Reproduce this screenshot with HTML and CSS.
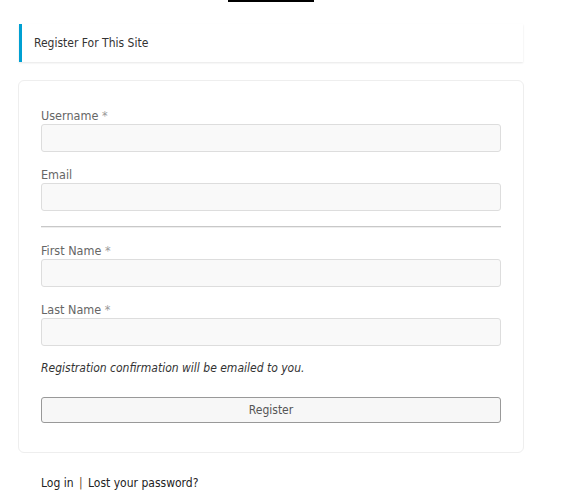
FILE: index.html
```html
<!DOCTYPE html>
<html>
<head>
<meta charset="utf-8">
<link rel="stylesheet" href="styles.css">
</head>
<body>
<div class="page">
  <div class="topline"></div>
  <div class="header">Register For This Site</div>
  <form class="card">
    <div class="field">
      <label class="label">Username <span class="req">*</span></label>
      <input class="input" type="text">
    </div>
    <div class="field">
      <label class="label">Email</label>
      <input class="input" type="text">
    </div>
    <hr class="divider">
    <div class="field">
      <label class="label">First Name <span class="req">*</span></label>
      <input class="input" type="text">
    </div>
    <div class="field">
      <label class="label">Last Name <span class="req">*</span></label>
      <input class="input" type="text">
    </div>
    <p class="note">Registration confirmation will be emailed to you.</p>
    <button class="button" type="button">Register</button>
  </form>
  <div class="links"><a class="link">Log in</a> <span class="sep">|</span> <a class="link">Lost your password?</a></div>
</div>
</body>
</html>
```
FILE: styles.css
```css
* { box-sizing: border-box; }
body {
  margin: 0;
  background: #fff;
  font-family: "DejaVu Sans Condensed", "DejaVu Sans", sans-serif;
  font-size: 12px;
  color: #333;
}
.page {
  width: 506px;
  margin-left: 18px;
}
.topline {
  width: 86px;
  height: 2px;
  background: #000;
  margin: 0 auto;
}
.header {
  margin: 22px 1px 0 1px;
  height: 38px;
  line-height: 38px;
  border-left: 3px solid #00a0d2;
  padding-left: 12px;
  box-shadow: 0 1px 2px rgba(0,0,0,0.1);
  color: #333;
}
.card {
  margin-top: 18px;
  border: 1px solid #eee;
  border-radius: 6px;
  padding: 26px 22px 29px 22px;
}
.field {
  display: flex;
  flex-direction: column;
  margin-bottom: 14px;
}
.label {
  font-size: 12.5px;
  line-height: 17px;
  color: #666;
}
.req { color: #999; }
.input {
  height: 28px;
  border: 1px solid #ddd;
  border-radius: 3px;
  background: #f9f9f9;
  font: inherit;
}
.divider {
  border: 0;
  border-top: 1px solid #c8c8c8;
  border-bottom: 1px solid #eee;
  margin: 15px 0 14px 0;
}
.note {
  margin: 13px 0 21px 0;
  line-height: 16px;
  font-style: italic;
  color: #333;
}
.button {
  display: block;
  width: 100%;
  height: 26px;
  border: 1px solid #999;
  border-radius: 3px;
  background: #f7f7f7;
  color: #555;
  font: inherit;
}
.links {
  margin-top: 22px;
  margin-left: 23px;
  line-height: 16px;
  color: #222;
}
.sep { color: #6b4a2a; padding: 0 2px; }
.link { color: #222; }
```
